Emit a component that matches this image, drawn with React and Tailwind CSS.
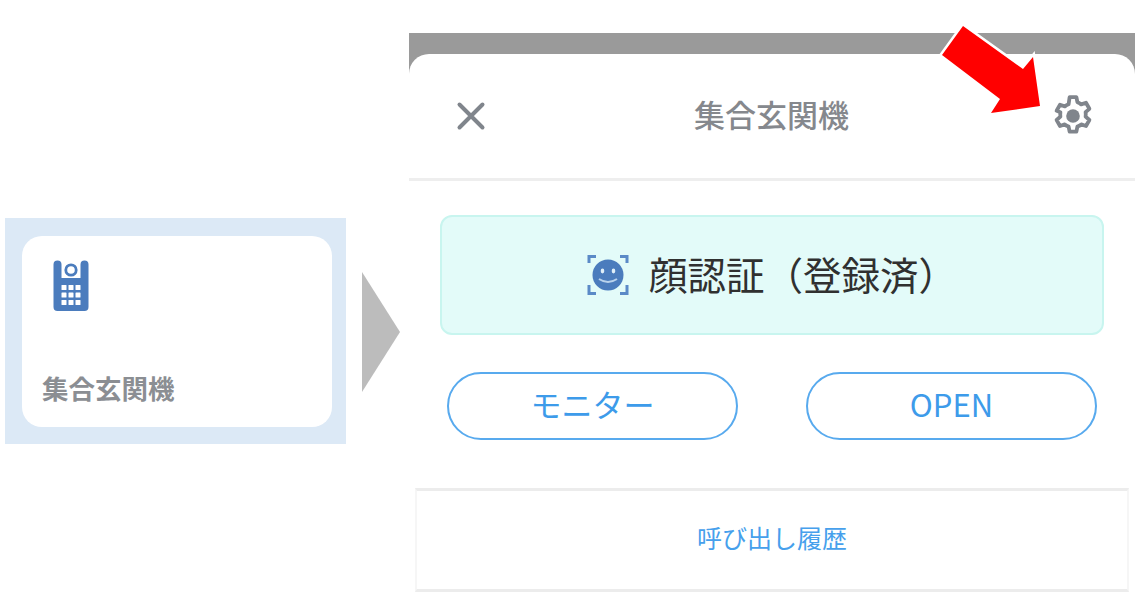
import React from 'react';

const jp = "font-['Noto_Sans_CJK_JP','Noto_Sans',sans-serif]";

function IntercomIcon() {
  return (
    <svg width="38" height="52" viewBox="0 0 38 52" className="block">
      <path d="M1.5 4.5 a4 4 0 0 1 8 0 V18 H28.5 V4.5 a4 4 0 0 1 8 0 V47 a4 4 0 0 1 -4 4 H5.5 a4 4 0 0 1 -4 -4 Z" fill="#4b7cbd" />
      <circle cx="19" cy="10" r="5.2" fill="none" stroke="#4b7cbd" strokeWidth="2.8" />
      {[25, 32.5, 40].map((y) =>
        [9.5, 16.5, 23.5].map((x) => (
          <rect key={`${x}-${y}`} x={x} y={y} width="5" height="5" rx="0.6" fill="#fff" />
        ))
      )}
    </svg>
  );
}

function FaceIcon() {
  return (
    <svg width="42" height="42" viewBox="0 0 42 42" className="block">
      <g fill="none" stroke="#5b8ac7" strokeWidth="3">
        <path d="M2 9 V2.5 H9" />
        <path d="M33 2.5 H40 V9" />
        <path d="M2 31 V39.5 H9" />
        <path d="M33 39.5 H40 V31" />
      </g>
      <circle cx="21" cy="21" r="15.5" fill="#4b7cbd" />
      <ellipse cx="15.5" cy="17" rx="1.8" ry="2.4" fill="#dfeef8" />
      <ellipse cx="26.5" cy="17" rx="1.8" ry="2.4" fill="#dfeef8" />
      <path d="M12 25 Q21 31 30 25" fill="none" stroke="#b9d2ec" strokeWidth="2" />
    </svg>
  );
}

function GearIcon() {
  return (
    <svg width="48" height="48" viewBox="0 0 24 24" className="block" fill="none" stroke="#80858c" strokeWidth="1.9" strokeLinejoin="round">
      <path d="M10.3 2.6 h3.4 l.5 2.5 a7.3 7.3 0 0 1 1.9 1.1 l2.4-.8 1.7 3 -1.9 1.7 a7.3 7.3 0 0 1 0 2.2 l1.9 1.7 -1.7 3 -2.4-.8 a7.3 7.3 0 0 1 -1.9 1.1 l-.5 2.5 h-3.4 l-.5-2.5 a7.3 7.3 0 0 1 -1.9-1.1 l-2.4.8 -1.7-3 1.9-1.7 a7.3 7.3 0 0 1 0-2.2 L3.8 9.4 l1.7-3 2.4.8 a7.3 7.3 0 0 1 1.9-1.1 Z" />
      <circle cx="12" cy="12" r="3.4" fill="#80858c" stroke="none" />
    </svg>
  );
}

function CloseIcon() {
  return (
    <svg width="30" height="30" viewBox="0 0 30 30" className="block">
      <path d="M3.5 3.5 L26.5 26.5 M26.5 3.5 L3.5 26.5" stroke="#80858c" strokeWidth="4" strokeLinecap="round" />
    </svg>
  );
}

function RedArrow() {
  // overlay that points at the gear
  return (
    <svg width="120" height="110" viewBox="0 0 120 110" className="absolute left-[930px] top-[14px]">
      <path
        d="M33 12 L12 41 L70 85 L61 99 L110 92 L103 43 L93 55 Z"
        fill="#ff0000"
        stroke="#fff"
        strokeWidth="5"
        strokeLinejoin="miter"
        paintOrder="stroke"
      />
    </svg>
  );
}

export default function App() {
  return (
    <div className={`relative flex h-[594px] w-[1139px] items-start overflow-hidden bg-white ${jp}`}>
      {/* Left tile */}
      <div className="ml-[5px] mt-[218px] h-[226px] w-[341px] bg-[#dce9f6] pb-[17px] pl-[17px] pr-[14px] pt-[18px]">
        <div className="flex h-full flex-col justify-between rounded-[20px] bg-white pb-[22px] pl-[20px] pt-[24px]">
          <div className="pl-[10px]">
            <IntercomIcon />
          </div>
          <div className="text-[26.5px] font-bold leading-[34px] text-[#8b8e93]">集合玄関機</div>
        </div>
      </div>

      <div className="ml-[16px] mt-[272px] h-[120px] w-[38px] bg-[#bcbcbc] [clip-path:polygon(0_0,100%_50%,0_100%)]" />

      {/* Right panel */}
      <div className="ml-[9px] mt-[33px] w-[726px] bg-[#9a9a9a] pt-[21px]">
        <div className="rounded-t-[20px] bg-white">
          <div className="flex h-[127px] items-center justify-between border-b-[3px] border-[#eeeeee] pl-[47px] pr-[38px]">
            <CloseIcon />
            <div className="ml-[8px] pb-[3px] text-[31px] font-medium text-[#85888d]">集合玄関機</div>
            <GearIcon />
          </div>

          <div className="px-[31px] pt-[34px]">
            <div className="flex h-[120px] w-[664px] items-center justify-center gap-[20px] rounded-[12px] border-2 border-[#c8f5ef] bg-[#e3fbf9]">
              <FaceIcon />
              <div className="pb-[2px] text-[38.5px] text-[#303030]">顔認証（登録済）</div>
            </div>
          </div>

          <div className="flex justify-between pl-[38px] pr-[38px] pt-[37px]">
            <div className="flex h-[68px] w-[291px] items-center justify-center rounded-full border-2 border-[#58aaee] pb-[4px] text-[31px] text-[#3d9bea]">モニター</div>
            <div className="flex h-[68px] w-[291px] items-center justify-center rounded-full border-2 border-[#58aaee] pb-[4px] text-[31px] text-[#3d9bea]">OPEN</div>
          </div>
        </div>
        <div className="bg-white pl-[6px] pr-[6px] pt-[48px]">
          <div className="flex h-[104px] items-center justify-center border-x-2 border-y-[3px] border-x-[#f6f6f6] border-y-[#ececec] pb-[4px] text-[25px] text-[#46a0ec]">呼び出し履歴</div>
        </div>
      </div>

      <RedArrow />
    </div>
  );
}
